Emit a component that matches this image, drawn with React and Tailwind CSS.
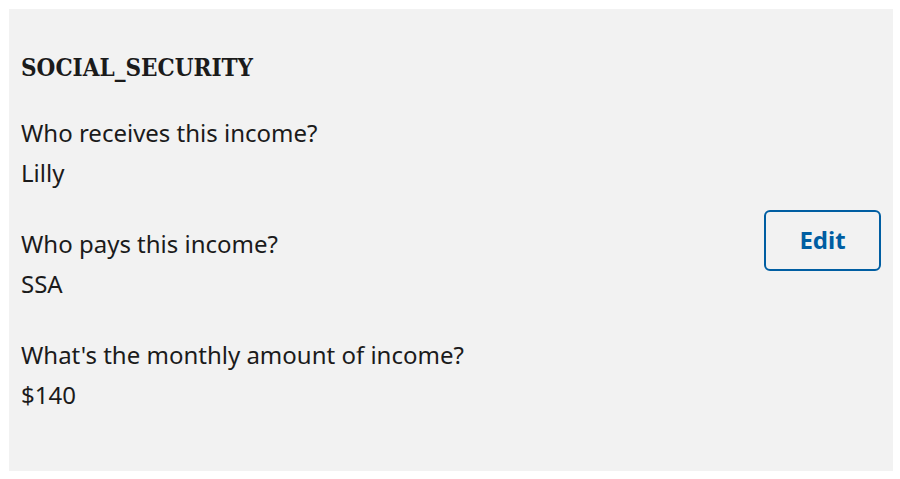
import React from 'react';

const answers = [
  { question: 'Who receives this income?', answer: 'Lilly' },
  { question: 'Who pays this income?', answer: 'SSA' },
  { question: "What's the monthly amount of income?", answer: '$140' },
];

const App = () => {
  return (
    <div className="min-h-screen bg-white pt-[9px] pl-[9px] pr-[7px]" style={{ fontFamily: '"Source Sans Pro", "Noto Sans", sans-serif' }}>
      <div className="flex items-start justify-between bg-[#f2f2f2] pl-3 pr-3 pt-[44px] h-[462px]">
        <div>
          <h3 className="text-[24px] font-bold text-[#1b1b1b] leading-[30px] mb-[30px]" style={{ fontFamily: '"DejaVu Serif Condensed", "DejaVu Serif", serif' }}>
            SOCIAL_SECURITY
          </h3>
          {answers.map((item) => (
            <div key={item.question} className="mb-[31px] last:mb-0">
              <p className="text-[24px] leading-[40px] text-[#1b1b1b]">{item.question}</p>
              <p className="text-[24px] leading-[40px] text-[#1b1b1b]">{item.answer}</p>
            </div>
          ))}
        </div>
        <button className="self-center -mt-[44px] w-[117px] h-[61px] rounded-[6px] border-2 border-[#005ea2] text-[#005ea2] text-[24px] font-bold bg-transparent">
          Edit
        </button>
      </div>
    </div>
  );
};

export default App;
